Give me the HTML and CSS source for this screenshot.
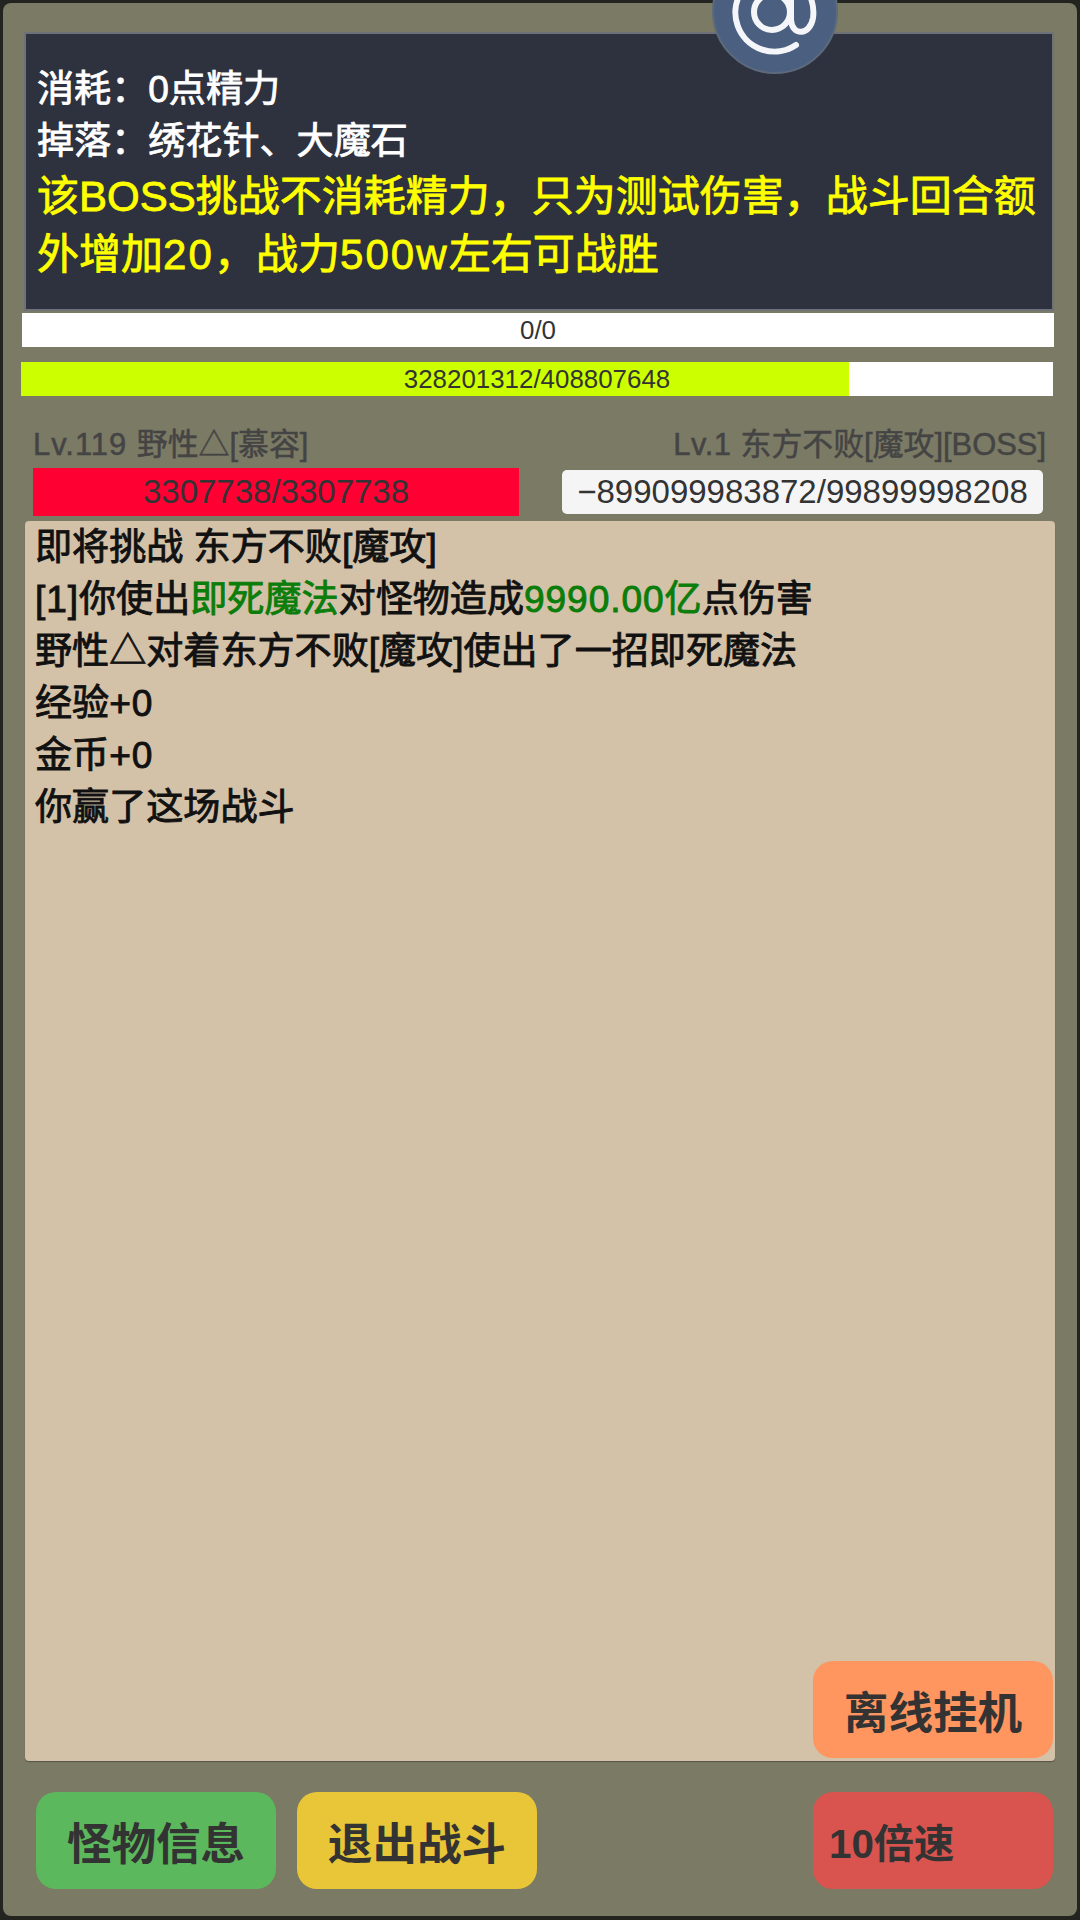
FILE: index.html
```html
<!DOCTYPE html>
<html lang="zh-CN">
<head>
<meta charset="utf-8">
<title>战斗</title>
<link rel="stylesheet" href="styles.css">
</head>
<body>
<div class="frame">
  <div class="avatar">
    <svg class="avatar-icon" viewBox="0 0 122 122" aria-hidden="true">
      <circle cx="58" cy="62" r="18" />
      <path d="M77 42 V70 C78 86 96 86 99 68 A39 39 0 1 0 82 95" />
    </svg>
  </div>
  <section class="intro">
    <p class="intro-line">消耗：0点精力</p>
    <p class="intro-line">掉落：绣花针、大魔石</p>
    <div class="intro-note">
      <p>该BOSS挑战不消耗精力，只为测试伤害，战斗回合额</p>
      <p>外增加<span class="num">20</span>，战力<span class="num">500w</span>左右可战胜</p>
    </div>
  </section>
  <div class="bar bar-mana">0/0</div>
  <div class="bar bar-exp">
    <div class="bar-fill" style="width: 80.28%"></div>
    <span class="bar-label">328201312/408807648</span>
  </div>
  <div class="fighters">
    <div class="fighter">
      <div class="fighter-name"><span class="lv">Lv.119 </span>野性△[慕容]</div>
      <div class="hp hp-player">3307738/3307738</div>
    </div>
    <div class="fighter fighter-right">
      <div class="fighter-name"><span class="lv">Lv.1 </span>东方不败[魔攻][BOSS]</div>
      <div class="hp hp-enemy">−899099983872/99899998208</div>
    </div>
  </div>
  <section class="log">
    <p>即将挑战 东方不败[魔攻]</p>
    <p><span class="num">[1]</span>你使出<span class="hit">即死魔法</span>对怪物造成<span class="hit"><span class="num">9990.00</span>亿</span>点伤害</p>
    <p>野性△对着东方不败[魔攻]使出了一招即死魔法</p>
    <p>经验<span class="num">+0</span></p>
    <p>金币<span class="num">+0</span></p>
    <p>你赢了这场战斗</p>
    <button class="btn btn-orange btn-idle">离线挂机</button>
  </section>
  <div class="actions">
    <button class="btn btn-green">怪物信息</button>
    <button class="btn btn-yellow">退出战斗</button>
    <button class="btn btn-red btn-speed">10倍速</button>
  </div>
</div>
</body>
</html>
```
FILE: styles.css
```css
* { box-sizing: border-box; }
html, body { margin: 0; padding: 0; }
body {
  width: 1080px;
  height: 1920px;
  background: #23231f;
  font-family: "Liberation Sans", "Noto Sans CJK SC", sans-serif;
  overflow: hidden;
}
p { margin: 0; }
.frame {
  position: relative;
  height: 1913px;
  margin: 3px 0 0 3px;
  width: 1074px;
  padding: 29px 0 0 18px;
  background: #7b7a64;
  border-radius: 8px;
  display: flex;
  flex-direction: column;
}
.avatar {
  position: absolute;
  left: 709px;
  top: -55px;
  width: 126px;
  height: 126px;
  border-radius: 50%;
  background: #4b6080;
  border: 2px solid #5d6a7c;
  z-index: 2;
}
.avatar-icon {
  display: block;
  width: 122px;
  height: 122px;
  fill: none;
  stroke: #f4f6fa;
  stroke-width: 6;
  stroke-linecap: round;
}
.intro {
  margin-left: 3px;
  width: 1030px;
  height: 279px;
  padding: 29px 0 0 11px;
  background: #2e323f;
  border: 2px solid #6f7178;
  color: #fff;
  font-size: 37.1px;
  white-space: nowrap;
  -webkit-text-stroke: 0.8px currentColor;
}
.intro-line { line-height: 52px; }
.intro-note {
  margin-top: 1px;
  font-size: 42px;
  line-height: 58px;
  color: #ffff00;
}
.intro-note .num { letter-spacing: 0.05em; }
.num { letter-spacing: 0.025em; }
.bar {
  position: relative;
  height: 34px;
  background: #fff;
  color: #333;
  font-size: 25.9px;
  line-height: 34px;
  text-align: center;
}
.bar-mana {
  width: 1032px;
  margin: 2px 0 0 1px;
}
.bar-exp {
  width: 1032px;
  margin-top: 15px;
}
.bar-fill {
  position: absolute;
  left: 0;
  top: 0;
  bottom: 0;
  background: #ccff00;
}
.bar-label { position: relative; }
.fighters {
  display: flex;
  justify-content: space-between;
  width: 1033px;
  margin-top: 30px;
  padding: 0 11px 0 12px;
}
.fighter {
  display: flex;
  flex-direction: column;
  width: 486px;
}
.fighter-right {
  width: 520px;
  align-items: flex-end;
}
.fighter-name {
  height: 42px;
  width: 100%;
  white-space: nowrap;
  color: #444;
  font-size: 30.9px;
  line-height: 38px;
  -webkit-text-stroke: 0.5px currentColor;
}
.lv { letter-spacing: 1px; }
.fighter-right .lv { letter-spacing: 0.5px; }
.fighter-right .fighter-name {
  text-align: right;
  margin-right: -3px;
}
.hp {
  font-size: 33px;
  color: #333;
  text-align: center;
}
.hp-player {
  height: 48px;
  line-height: 48px;
  background: #ff0033;
}
.hp-enemy {
  width: 481px;
  height: 44px;
  margin-top: 2px;
  line-height: 44px;
  background: #f5f5f5;
  border-radius: 5px;
}
.log {
  position: relative;
  margin: 5px 0 0 4px;
  width: 1030px;
  height: 1240px;
  padding: 0 10px;
  background: #d3c1a8;
  border-radius: 4px;
  box-shadow: 0 1px 1px #55544a;
  color: #111;
  font-size: 37.1px;
  line-height: 52px;
  -webkit-text-stroke: 0.9px currentColor;
}
.hit { color: #0a7d0a; }
.btn {
  width: 240px;
  height: 97px;
  padding: 0;
  border: 0;
  border-radius: 20px;
  font-family: inherit;
  font-size: 44.6px;
  font-weight: 700;
  color: #333;
  -webkit-text-stroke: 0;
}
.btn-idle {
  position: absolute;
  right: 2px;
  bottom: 3px;
}
.btn-orange { background: #ff955f; }
.btn-green { background: #5cb85c; }
.btn-yellow { background: #e8c637; }
.btn-red { background: #d9534f; }
.btn-speed {
  margin-left: auto;
  padding-left: 16px;
  text-align: left;
  font-size: 40.3px;
}
.actions {
  display: flex;
  gap: 21px;
  width: 1034px;
  margin-top: 31px;
  padding: 0 2px 0 15px;
}
```
